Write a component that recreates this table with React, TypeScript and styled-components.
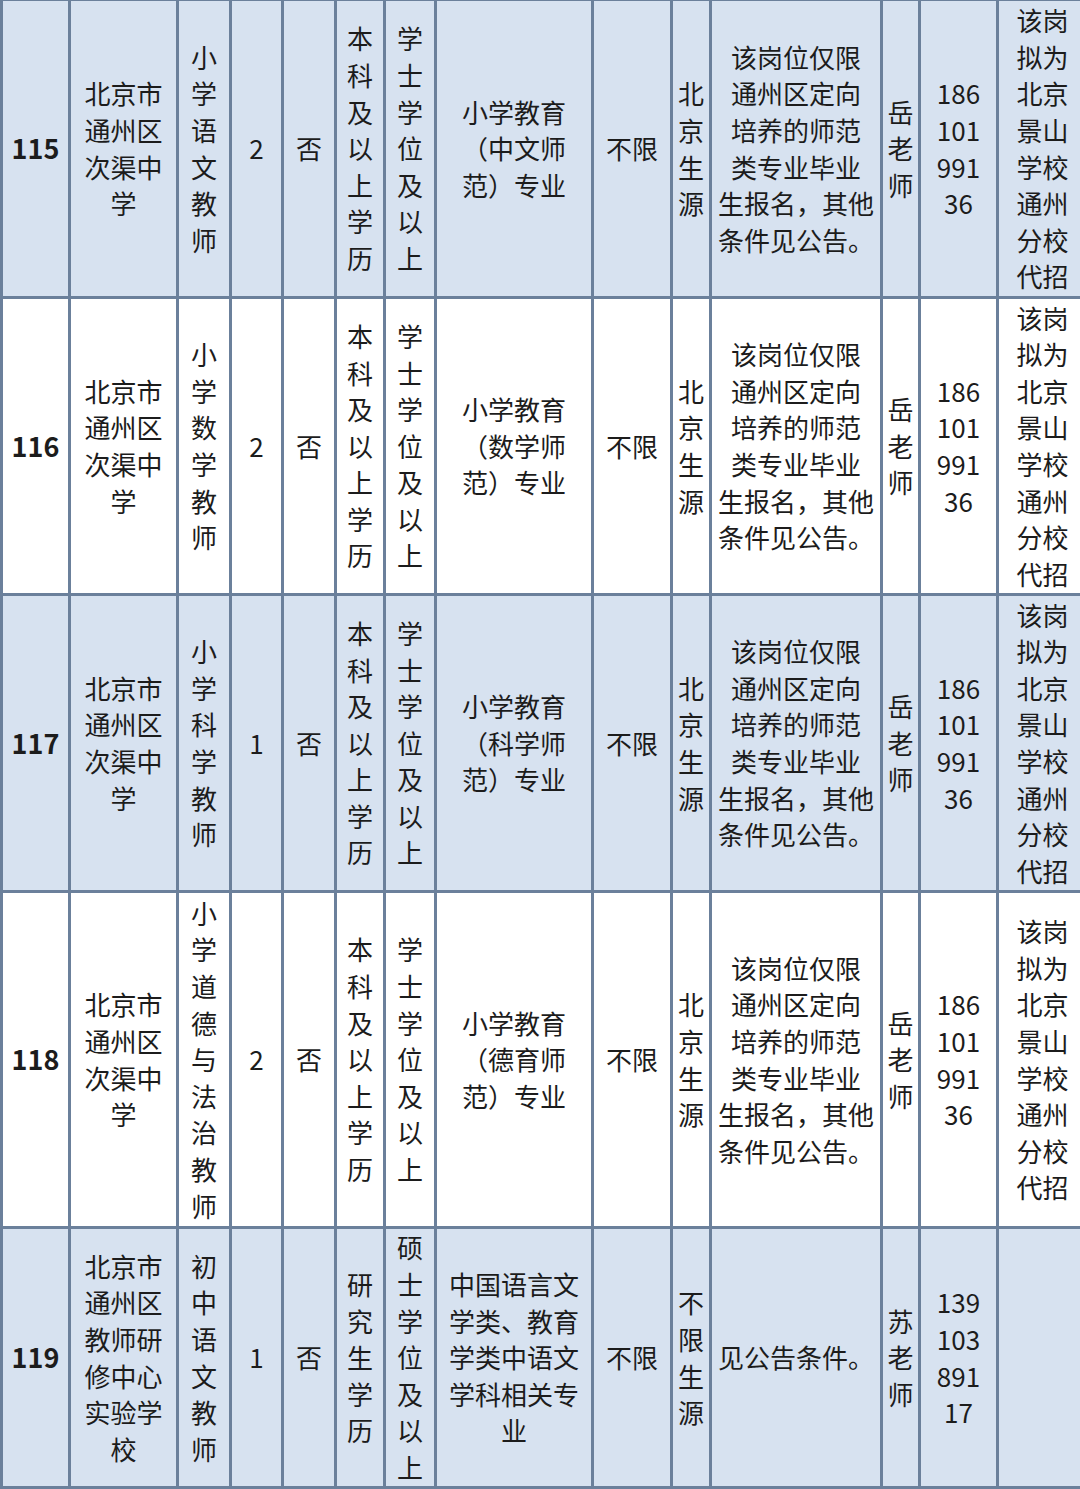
import React from "react";
import styled, { createGlobalStyle } from "styled-components";

const GlobalStyle = createGlobalStyle`
  html, body {
    margin: 0;
    padding: 0;
    background: #ffffff;
    overflow: hidden;
  }
`;

// Page frame: the table is a crop of a longer sheet, so it runs a little past the top and right edge
const Page = styled.div`
  width: 1080px;
  height: 1489px;
  overflow: hidden;
`;

const Sheet = styled.table`
  border-collapse: collapse;
  table-layout: fixed;
  width: 1084px;
  margin-top: -2px;
  margin-left: 0;
  font-family: "Noto Sans CJK SC", "Noto Sans", sans-serif;
  font-size: 26px;
  line-height: 36.6px;
  color: #1c1c1c;
`;

const Col = styled.col<{ $w: number }>`
  width: ${({ $w }) => $w}px;
`;

const Row = styled.tr<{ $shade: boolean; $h: number }>`
  height: ${({ $h }) => $h}px;
  background: ${({ $shade }) => ($shade ? "#d7e2f0" : "#ffffff")};
`;

const Cell = styled.td<{ $bold?: boolean }>`
  border: 3px solid #6b809b;
  padding: 0 2px;
  text-align: center;
  vertical-align: middle;
  white-space: pre-line;
  overflow: hidden;
  font-weight: ${({ $bold }) => ($bold ? 700 : 400)};
  font-size: ${({ $bold }) => ($bold ? "27px" : "26px")};
`;

// one character per line, for the narrow columns
const v = (s: string) => Array.from(s).join("\n");

const widths = [68, 108, 53, 52, 53, 49, 51, 157, 79, 39, 171, 38, 78, 90];

const noteLong =
  "该岗位仅限\n通州区定向\n培养的师范\n类专业毕业\n生报名，其他\n条件见公告。";
const remark = "该岗\n拟为\n北京\n景山\n学校\n通州\n分校\n代招";
const yuePhone = "186\n101\n991\n36";

type Post = {
  no: string;
  unit: string;
  post: string;
  count: string;
  edu: string;
  degree: string;
  major: string;
  origin: string;
  note: string;
  teacher: string;
  phone: string;
  remark: string;
  height: number;
};

const posts: Post[] = [
  {
    no: "115",
    unit: "北京市\n通州区\n次渠中\n学",
    post: "小学语文教师",
    count: "2",
    edu: "本科及以上学历",
    degree: "学士学位及以上",
    major: "小学教育\n（中文师\n范）专业",
    origin: "北京生源",
    note: noteLong,
    teacher: "岳老师",
    phone: yuePhone,
    remark,
    height: 298,
  },
  {
    no: "116",
    unit: "北京市\n通州区\n次渠中\n学",
    post: "小学数学教师",
    count: "2",
    edu: "本科及以上学历",
    degree: "学士学位及以上",
    major: "小学教育\n（数学师\n范）专业",
    origin: "北京生源",
    note: noteLong,
    teacher: "岳老师",
    phone: yuePhone,
    remark,
    height: 297,
  },
  {
    no: "117",
    unit: "北京市\n通州区\n次渠中\n学",
    post: "小学科学教师",
    count: "1",
    edu: "本科及以上学历",
    degree: "学士学位及以上",
    major: "小学教育\n（科学师\n范）专业",
    origin: "北京生源",
    note: noteLong,
    teacher: "岳老师",
    phone: yuePhone,
    remark,
    height: 297,
  },
  {
    no: "118",
    unit: "北京市\n通州区\n次渠中\n学",
    post: "小学道德与法治教师",
    count: "2",
    edu: "本科及以上学历",
    degree: "学士学位及以上",
    major: "小学教育\n（德育师\n范）专业",
    origin: "北京生源",
    note: noteLong,
    teacher: "岳老师",
    phone: yuePhone,
    remark,
    height: 336,
  },
  {
    no: "119",
    unit: "北京市\n通州区\n教师研\n修中心\n实验学\n校",
    post: "初中语文教师",
    count: "1",
    edu: "研究生学历",
    degree: "硕士学位及以上",
    major: "中国语言文\n学类、教育\n学类中语文\n学科相关专\n业",
    origin: "不限生源",
    note: "见公告条件。",
    teacher: "苏老师",
    phone: "139\n103\n891\n17",
    remark: "",
    height: 260,
  },
];

const App = () => {
  return (
    <Page>
      <GlobalStyle />
      <Sheet>
        <colgroup>
          {widths.map((w, i) => (
            <Col key={i} $w={w} />
          ))}
        </colgroup>
        <tbody>
          {posts.map((p, i) => (
            <Row key={p.no} $shade={i % 2 === 0} $h={p.height}>
              <Cell $bold>{p.no}</Cell>
              <Cell>{p.unit}</Cell>
              <Cell>{v(p.post)}</Cell>
              <Cell>{p.count}</Cell>
              <Cell>否</Cell>
              <Cell>{v(p.edu)}</Cell>
              <Cell>{v(p.degree)}</Cell>
              <Cell>{p.major}</Cell>
              <Cell>不限</Cell>
              <Cell>{v(p.origin)}</Cell>
              <Cell>{p.note}</Cell>
              <Cell>{v(p.teacher)}</Cell>
              <Cell>{p.phone}</Cell>
              <Cell>{p.remark}</Cell>
            </Row>
          ))}
        </tbody>
      </Sheet>
    </Page>
  );
};

export default App;
